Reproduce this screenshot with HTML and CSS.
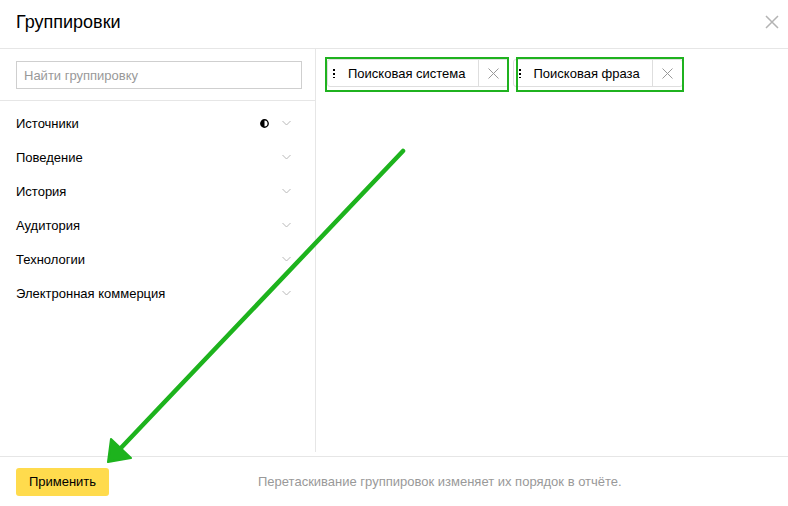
FILE: index.html
```html
<!DOCTYPE html>
<html lang="ru">
<head>
<meta charset="utf-8">
<title>Группировки</title>
<link rel="stylesheet" href="styles.css">
</head>
<body>
<div class="modal">
  <header class="head">
    <h1 class="title">Группировки</h1>
    <button class="close" aria-label="Закрыть">
      <svg width="14" height="14" viewBox="0 0 14 14"><path d="M1 1L13 13M13 1L1 13" stroke="#b3b3b3" stroke-width="1.5"/></svg>
    </button>
  </header>
  <div class="main">
    <aside class="side">
      <div class="search">
        <input class="input" type="text" placeholder="Найти группировку">
      </div>
      <ul class="list">
        <li class="item"><span>Источники</span><span class="marks">
          <svg class="half" width="9" height="9" viewBox="0 0 9 9"><circle cx="4.5" cy="4.5" r="3.7" fill="#fff" stroke="#000" stroke-width="1.4"/><path d="M4.5 0.8A3.7 3.7 0 0 0 4.5 8.2Z" fill="#000"/></svg>
          <svg class="chev" width="9" height="6" viewBox="0 0 9 6"><path d="M0.5 1L4.5 5L8.5 1" fill="none" stroke="#b8b8b8" stroke-width="1"/></svg></span></li>
        <li class="item"><span>Поведение</span><span class="marks"><svg class="chev" width="9" height="6" viewBox="0 0 9 6"><path d="M0.5 1L4.5 5L8.5 1" fill="none" stroke="#b8b8b8" stroke-width="1"/></svg></span></li>
        <li class="item"><span>История</span><span class="marks"><svg class="chev" width="9" height="6" viewBox="0 0 9 6"><path d="M0.5 1L4.5 5L8.5 1" fill="none" stroke="#b8b8b8" stroke-width="1"/></svg></span></li>
        <li class="item"><span>Аудитория</span><span class="marks"><svg class="chev" width="9" height="6" viewBox="0 0 9 6"><path d="M0.5 1L4.5 5L8.5 1" fill="none" stroke="#b8b8b8" stroke-width="1"/></svg></span></li>
        <li class="item"><span>Технологии</span><span class="marks"><svg class="chev" width="9" height="6" viewBox="0 0 9 6"><path d="M0.5 1L4.5 5L8.5 1" fill="none" stroke="#b8b8b8" stroke-width="1"/></svg></span></li>
        <li class="item"><span>Электронная коммерция</span><span class="marks"><svg class="chev" width="9" height="6" viewBox="0 0 9 6"><path d="M0.5 1L4.5 5L8.5 1" fill="none" stroke="#b8b8b8" stroke-width="1"/></svg></span></li>
      </ul>
    </aside>
    <section class="chosen">
      <div class="chip">
        <span class="grip"></span>
        <span class="chip-text">Поисковая система</span>
        <span class="chip-x"><svg width="11" height="11" viewBox="0 0 11 11"><path d="M0.5 0.5L10.5 10.5M10.5 0.5L0.5 10.5" stroke="#999" stroke-width="1"/></svg></span>
      </div>
      <div class="chip">
        <span class="grip"></span>
        <span class="chip-text">Поисковая фраза</span>
        <span class="chip-x"><svg width="11" height="11" viewBox="0 0 11 11"><path d="M0.5 0.5L10.5 10.5M10.5 0.5L0.5 10.5" stroke="#999" stroke-width="1"/></svg></span>
      </div>
    </section>
  </div>
  <footer class="foot">
    <button class="apply">Применить</button>
    <span class="hint">Перетаскивание группировок изменяет их порядок в отчёте.</span>
  </footer>

  <div class="mark mark-1"></div>
  <div class="mark mark-2"></div>
  <svg class="arrow" width="788" height="506" viewBox="0 0 788 506">
    <path d="M403 151L119 450" stroke="#1db31d" stroke-width="4.5" stroke-linecap="round"/>
    <path d="M108 462L111 439L131 458Z" fill="#1db31d" stroke="#1db31d" stroke-width="2" stroke-linejoin="round"/>
  </svg>
</div>
</body>
</html>
```

FILE: styles.css
```css
* { box-sizing: border-box; }
html, body { margin: 0; padding: 0; background: #fff; }
body {
  font-family: "Liberation Sans", Arial, sans-serif;
  font-size: 13px;
  color: #000;
}
.modal {
  position: relative;
  width: 788px;
  height: 506px;
  display: flex;
  flex-direction: column;
  overflow: hidden;
}
.head {
  height: 49px;
  border-bottom: 1px solid #e6e6e6;
  display: flex;
  align-items: center;
  justify-content: space-between;
  padding: 0 16px 4px 16px;
}
.title {
  margin: 0;
  font-weight: normal;
  font-size: 18px;
  color: #000;
}
.close {
  border: 0;
  background: none;
  padding: 0;
  margin-right: -7px;
  display: flex;
}
.main {
  display: flex;
  height: 403px;
}
.side {
  width: 316px;
  border-right: 1px solid #e6e6e6;
}
.search {
  padding: 12px 13px 11px 16px;
  border-bottom: 1px solid #e6e6e6;
}
.input {
  display: block;
  width: 100%;
  height: 28px;
  border: 1px solid #cfcfcf;
  padding: 0 7px;
  font: inherit;
  font-size: 13px;
  outline: none;
}
.input::placeholder { color: #999; }
.list {
  list-style: none;
  margin: 0;
  padding: 5px 0 0 0;
}
.item {
  height: 34px;
  display: flex;
  align-items: center;
  justify-content: space-between;
  padding: 0 24px 0 16px;
}
.marks {
  display: flex;
  align-items: center;
  gap: 13px;
}
.chosen {
  flex: 1;
  display: flex;
  align-items: flex-start;
  gap: 4px;
  padding: 10px 0 0 11px;
}
.chip {
  height: 28px;
  display: flex;
  align-items: center;
  border: 1px solid #dedede;
  border-radius: 3px;
  background: #fff;
}
.grip {
  width: 2px;
  height: 10px;
  margin: 0 13px 0 5px;
  background: radial-gradient(circle, #000 0.9px, transparent 1.1px) 0 0 / 2px 4px repeat-y;
}
.chip-text {
  padding-right: 12px;
}
.chip-x {
  width: 30px;
  height: 26px;
  border-left: 1px solid #dedede;
  display: flex;
  align-items: center;
  justify-content: center;
}
.foot {
  margin-top: 4px;
  flex: 1;
  border-top: 1px solid #e6e6e6;
  display: flex;
  align-items: center;
  padding: 0 16px;
}
.apply {
  height: 28px;
  width: 93px;
  border: 0;
  border-radius: 3px;
  background: #ffdb4d;
  font: inherit;
  font-size: 13px;
  color: #000;
  padding: 0;
  margin-top: 0;
}
.hint {
  margin-left: 149px;
  color: #999;
}
.mark {
  position: absolute;
  border: 2px solid #1fb21f;
}
.mark-1 { left: 325px; top: 57px; width: 184px; height: 35px; }
.mark-2 { left: 516px; top: 57px; width: 168px; height: 35px; }
.arrow {
  position: absolute;
  left: 0;
  top: 0;
  pointer-events: none;
}
```
